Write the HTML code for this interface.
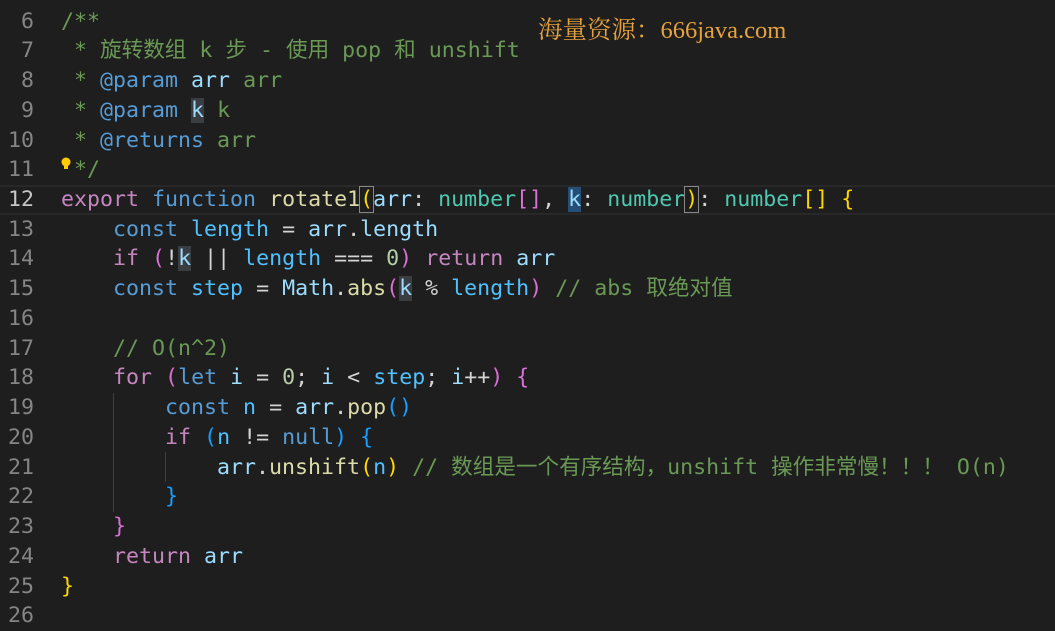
<!DOCTYPE html>
<html><head><meta charset="utf-8"><style>
body{margin:0;width:1055px;height:620px;background:#1e1e1e;overflow:hidden;position:relative;font-family:"DejaVu Sans Mono","Noto Sans CJK SC",monospace;font-size:21.6px}
.l{position:absolute;left:0;height:29.74px;line-height:29.74px;white-space:pre;width:1055px}
.n{position:absolute;left:0;width:34px;text-align:right;color:#858585}
.c{position:absolute;left:61px;color:#d4d4d4}
.cm{color:#6a9955}.kw{color:#569cd6}.pk{color:#c586c0}.fn{color:#dcdcaa}.v{color:#9cdcfe}.cv{color:#4fc1ff}.t{color:#4ec9b0}.nu{color:#b5cea8}
.b1{color:#ffd700}.b2{color:#da70d6}.b3{color:#179fff}
.hl{background:#3a3d41}
.g{position:absolute;width:1px;background:#404040}
</style></head><body>
<div class="l" style="top:185px;border-top:2px solid #282828;border-bottom:2px solid #282828;height:26px"></div>
<div class="g" style="left:113px;top:393px;height:119px"></div>
<div class="g" style="left:165px;top:452px;height:30px"></div>
<div style="position:absolute;left:538px;top:11px;font-family:'Liberation Serif','Noto Serif CJK SC',serif;font-size:24.5px;color:#e6a23c">海量资源：666java.com</div>
<div class="l" style="top:6.5px"><span class="n">6</span><span class="c cm">/**</span></div>
<div class="l" style="top:36.2px"><span class="n">7</span><span class="c cm"> * 旋转数组 k 步 - 使用 pop 和 unshift</span></div>
<div class="l" style="top:66px"><span class="n">8</span><span class="c cm"> * <span class="kw">@param</span> <span class="v">arr</span> arr</span></div>
<div class="l" style="top:95.7px"><span class="n">9</span><span class="c cm"> * <span class="kw">@param</span> <span class="v hl">k</span> k</span></div>
<div class="l" style="top:125.5px"><span class="n">10</span><span class="c cm"> * <span class="kw">@returns</span> arr</span></div>
<div class="l" style="top:155.2px"><span class="n">11</span><span class="c cm"> */</span><svg style="position:absolute;left:61px;top:2px" width="10" height="14" viewBox="0 0 10 14"><circle cx="5" cy="5" r="4.5" fill="#ffcc00"/><rect x="3" y="9" width="4" height="3" fill="#ffcc00"/></svg></div>
<div class="l" style="top:185px"><span class="n" style="color:#c6c6c6">12</span><span class="c"><span class="pk">export</span> <span class="kw">function</span> <span class="fn">rotate1</span><span class="b1" style="outline:1px solid #888">(</span><span class="v">arr</span>: <span class="t">number</span><span class="b2">[]</span>, <span class="v" style="background:#264f78">k</span>: <span class="t">number</span><span class="b1" style="outline:1px solid #888">)</span>: <span class="t">number</span><span class="b1">[]</span> <span class="b1">{</span></span></div>
<div class="l" style="top:214.7px"><span class="n">13</span><span class="c">    <span class="kw">const</span> <span class="cv">length</span> = <span class="v">arr</span>.<span class="v">length</span></span></div>
<div class="l" style="top:244.4px"><span class="n">14</span><span class="c">    <span class="pk">if</span> <span class="b2">(</span>!<span class="v hl">k</span> || <span class="cv">length</span> === <span class="nu">0</span><span class="b2">)</span> <span class="pk">return</span> <span class="v">arr</span></span></div>
<div class="l" style="top:274.2px"><span class="n">15</span><span class="c">    <span class="kw">const</span> <span class="cv">step</span> = <span class="v">Math</span>.<span class="fn">abs</span><span class="b2">(</span><span class="v hl">k</span> % <span class="cv">length</span><span class="b2">)</span> <span class="cm">// abs 取绝对值</span></span></div>
<div class="l" style="top:303.9px"><span class="n">16</span></div>
<div class="l" style="top:333.6px"><span class="n">17</span><span class="c">    <span class="cm">// O(n^2)</span></span></div>
<div class="l" style="top:363.4px"><span class="n">18</span><span class="c">    <span class="pk">for</span> <span class="b2">(</span><span class="kw">let</span> <span class="v">i</span> = <span class="nu">0</span>; <span class="v">i</span> &lt; <span class="cv">step</span>; <span class="v">i</span>++<span class="b2">)</span> <span class="b2">{</span></span></div>
<div class="l" style="top:393.1px"><span class="n">19</span><span class="c">        <span class="kw">const</span> <span class="cv">n</span> = <span class="v">arr</span>.<span class="fn">pop</span><span class="b3">()</span></span></div>
<div class="l" style="top:422.8px"><span class="n">20</span><span class="c">        <span class="pk">if</span> <span class="b3">(</span><span class="cv">n</span> != <span class="kw">null</span><span class="b3">)</span> <span class="b3">{</span></span></div>
<div class="l" style="top:452.6px"><span class="n">21</span><span class="c">            <span class="v">arr</span>.<span class="fn">unshift</span><span class="b1">(</span><span class="cv">n</span><span class="b1">)</span> <span class="cm">// 数组是一个有序结构，unshift 操作非常慢！！！ O(n)</span></span></div>
<div class="l" style="top:482.3px"><span class="n">22</span><span class="c">        <span class="b3">}</span></span></div>
<div class="l" style="top:512px"><span class="n">23</span><span class="c">    <span class="b2">}</span></span></div>
<div class="l" style="top:541.8px"><span class="n">24</span><span class="c">    <span class="pk">return</span> <span class="v">arr</span></span></div>
<div class="l" style="top:571.5px"><span class="n">25</span><span class="c"><span class="b1">}</span></span></div>
<div class="l" style="top:601.2px"><span class="n">26</span></div>
</body></html>
